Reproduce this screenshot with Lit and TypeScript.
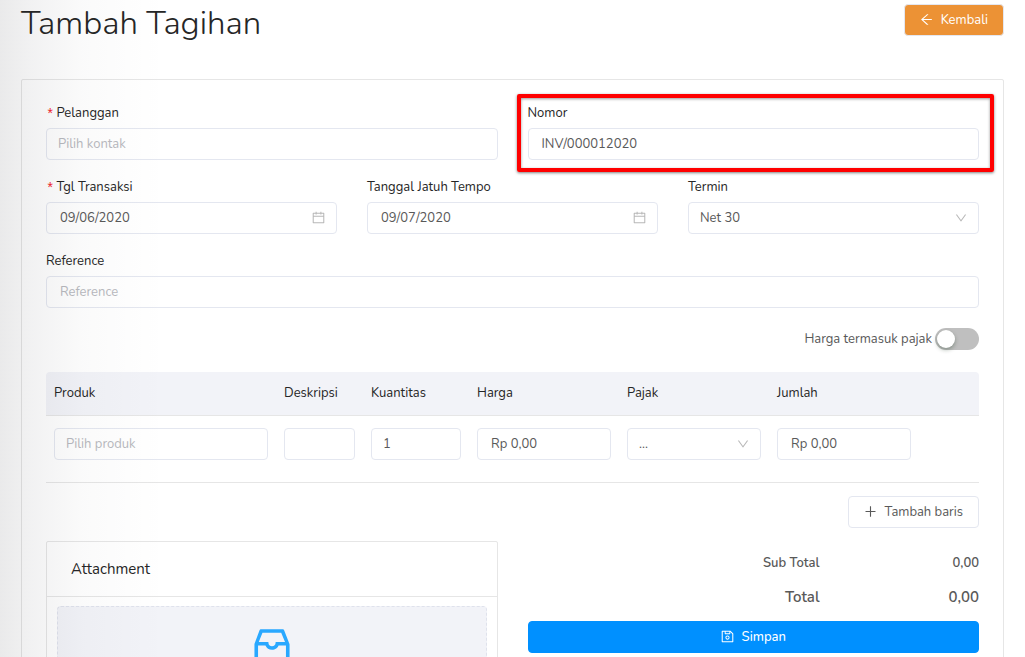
import { LitElement, html, css, svg } from "lit";
import { customElement, property, state } from "lit/decorators.js";

const ICONS: Record<string, string> = {
  "arrow-left":
    "M872 474H286.9l350.2-304c5.6-4.9 2.2-14-5.2-14h-88.5c-3.9 0-7.6 1.4-10.5 3.9L155 487.8a31.96 31.96 0 0 0 0 48.3L535.1 866c1.5 1.3 3.3 2 5.2 2h91.5c7.4 0 10.8-9.2 5.2-14L286.9 550H872c4.4 0 8-3.6 8-8v-60c0-4.4-3.6-8-8-8z",
  calendar:
    "M880 184H712v-64c0-4.4-3.6-8-8-8h-56c-4.4 0-8 3.6-8 8v64H384v-64c0-4.4-3.6-8-8-8h-56c-4.4 0-8 3.6-8 8v64H144c-17.7 0-32 14.3-32 32v664c0 17.7 14.3 32 32 32h736c17.7 0 32-14.3 32-32V216c0-17.7-14.3-32-32-32zm-40 656H184V460h656v380zM184 392V256h128v48c0 4.4 3.6 8 8 8h56c4.4 0 8-3.6 8-8v-48h256v48c0 4.4 3.6 8 8 8h56c4.4 0 8-3.6 8-8v-48h128v136H184z",
  down: "M884 256h-75c-5.1 0-9.9 2.5-12.9 6.6L512 654.2 227.9 262.6c-3-4.1-7.8-6.6-12.9-6.6h-75c-6.5 0-10.3 7.4-6.5 12.7l352.6 486.1c12.8 17.6 39 17.6 51.7 0l352.6-486.1c3.9-5.3.1-12.7-6.4-12.7z",
  plus: "M482 152h60q8 0 8 8v704q0 8-8 8h-60q-8 0-8-8V160q0-8 8-8zM176 474h672q8 0 8 8v60q0 8-8 8H176q-8 0-8-8v-60q0-8 8-8z",
  save: "M893.3 293.3L730.7 130.7c-7.5-7.5-16.7-13-26.7-16V112H144c-17.7 0-32 14.3-32 32v736c0 17.7 14.3 32 32 32h736c17.7 0 32-14.3 32-32V338.5c0-17-6.7-33.2-18.7-45.2zM384 184h256v104H384V184zm456 656H184V184h136v136c0 17.7 14.3 32 32 32h320c17.7 0 32-14.3 32-32V205.8l136 136V840zM512 442c-79.5 0-144 64.5-144 144s64.5 144 144 144 144-64.5 144-144-64.5-144-144-144zm0 224c-44.2 0-80-35.8-80-80s35.8-80 80-80 80 35.8 80 80-35.8 80-80 80z",
  inbox:
    "M885.2 446.3l-.2-.8-112.2-285.1c-5-16.1-19.9-27.2-36.8-27.2H281.2c-17 0-32.1 11.3-36.9 27.6L139.4 443l-.3.7-.2.8c-1.3 4.9-1.7 9.9-1 14.8-.1 1.6-.2 3.2-.2 4.8V830a60.9 60.9 0 0 0 60.8 60.8h627.2c33.5 0 60.8-27.3 60.9-60.8V464.1c0-1.3 0-2.6-.1-3.7.4-4.9 0-9.6-1.3-14.1zm-295.8-43l-.3 15.7c-.8 44.9-31.8 75.1-77.1 75.1-22.1 0-41.1-7.1-54.8-20.6S436 441.2 435.6 419l-.3-15.7H229.5L309 210h399.2l81.7 193.3H589.4zm-375 76.8h157.3c24.3 57.1 76 90.8 140.4 90.8 33.7 0 65-9.4 90.3-27.2 22.2-15.6 39.5-37.4 50.7-63.6h156.5V814H214.4V480.1z",
};

@customElement("ui-icon")
class UiIcon extends LitElement {
  @property() name = "";

  static styles = css`
    :host {
      display: inline-flex;
      width: 13px;
      height: 13px;
    }
    .glyph {
      width: 100%;
      height: 100%;
      fill: currentColor;
    }
  `;

  render() {
    return html`<svg class="glyph" viewBox="64 64 896 896" aria-hidden="true">
      ${svg`<path d=${ICONS[this.name] ?? ""}></path>`}
    </svg>`;
  }
}

@customElement("app-root")
class AppRoot extends LitElement {
  @state() private taxIncluded = false;

  static styles = css`
    :host {
      display: block;
      position: relative;
      height: 100vh;
      overflow-y: auto;
      scrollbar-width: none;
      background: #fff;
      color: #595959;
      font-family: Nunito, Lato, sans-serif;
      font-size: 13px;
      font-weight: 400;
      line-height: 18px;
    }
    * {
      box-sizing: border-box;
    }
    .shade {
      position: absolute;
      top: 0;
      bottom: 0;
      left: 0;
      width: 166px;
      pointer-events: none;
      background: linear-gradient(
        to right,
        rgba(20, 20, 30, 0.09),
        rgba(20, 20, 30, 0.055) 20%,
        rgba(20, 20, 30, 0.018) 50%,
        rgba(20, 20, 30, 0)
      );
    }
    .page {
      padding: 4px 21px 0;
    }
    .top {
      display: flex;
      justify-content: space-between;
      align-items: flex-start;
      height: 75px;
    }
    .title {
      margin: 0;
      color: #262626;
      font-size: 33px;
      font-weight: 300;
      line-height: 40px;
    }
    .btn {
      display: inline-flex;
      align-items: center;
      justify-content: center;
      gap: 8px;
      height: 32px;
      padding: 0 15px 1px;
      border: 1px solid #e4e7f0;
      border-radius: 4px;
      background: #fff;
      color: #595959;
      font: inherit;
      cursor: pointer;
    }
    .back {
      background: #ec9235;
      color: #fff;
    }
    .save {
      width: 100%;
      border-color: #0090ff;
      background: #0090ff;
      color: #fff;
      font-weight: 500;
    }
    .card {
      border: 1px solid #e6e6e6;
      border-radius: 2px;
      padding: 24px;
    }
    .form {
      display: grid;
      gap: 18px;
    }
    .row {
      display: grid;
      grid-auto-flow: column;
      grid-auto-columns: minmax(0, 1fr);
      gap: 30px;
    }
    .field {
      position: relative;
      display: grid;
      gap: 6px;
    }
    .label {
      display: flex;
      color: #262626;
    }
    .required::before {
      content: "*";
      margin: 4px 2px 0 0;
      color: #f5222d;
      font-family: "Liberation Mono", monospace;
      font-size: 14px;
      line-height: 14px;
    }
    .highlight {
      position: absolute;
      inset: -10px -15px -12px -11px;
      border: 4px solid #ff0000;
      border-radius: 2px;
      box-shadow: 0 1px 3px rgba(0, 0, 0, 0.5), inset 0 1px 3px rgba(0, 0, 0, 0.4);
      pointer-events: none;
    }
    .control {
      position: relative;
      display: flex;
    }
    .input {
      width: 100%;
      height: 32px;
      margin: 0;
      padding: 0 12px 1px 13px;
      border: 1px solid #e4e7f0;
      border-radius: 4px;
      outline: none;
      background: #fff;
      color: #595959;
      font: inherit;
      appearance: none;
    }
    .pick {
      padding: 0 11px 1px;
    }
    .input::placeholder {
      color: #b8b9be;
      opacity: 1;
    }
    .suffix {
      position: absolute;
      top: 9px;
      right: 12px;
      color: #b8b8b8;
      pointer-events: none;
    }
    .arrow {
      top: 10px;
      width: 12px;
      height: 12px;
    }
    .tax {
      display: flex;
      align-items: center;
      justify-content: flex-end;
      gap: 3px;
      padding: 20px 0 22px;
    }
    .switch {
      display: flex;
      align-items: center;
      width: 44px;
      height: 22px;
      margin: 0;
      padding: 2px;
      border-radius: 11px;
      background: #bfbfbf;
      appearance: none;
      cursor: pointer;
    }
    .switch::before {
      content: "";
      width: 18px;
      height: 18px;
      border-radius: 50%;
      background: #fff;
      box-shadow: 0 2px 4px rgba(0, 35, 11, 0.3);
    }
    .switch:checked {
      justify-content: flex-end;
      background: #0090ff;
    }
    .items {
      width: 100%;
      border-collapse: separate;
      border-spacing: 0;
      table-layout: fixed;
    }
    .items th {
      height: 44px;
      padding: 0 8px 2px;
      border-bottom: 1px solid #e6e6e6;
      background: #f2f3f8;
      color: #262626;
      font-weight: 400;
      text-align: left;
    }
    .items th:first-child {
      border-top-left-radius: 4px;
    }
    .items th:last-child {
      border-top-right-radius: 4px;
    }
    .items td {
      padding: 12px 8px 22px;
      border-bottom: 1px solid #e6e6e6;
    }
    .items .w-desc {
      width: 87px;
    }
    .items .w-qty {
      width: 106px;
    }
    .items .w-money {
      width: 150px;
    }
    .items .w-action {
      width: 60px;
    }
    .add {
      display: flex;
      justify-content: flex-end;
      padding: 13px 0;
    }
    .attach {
      border: 1px solid #e6e6e6;
      border-radius: 2px;
    }
    .attach-title {
      margin: 0;
      padding: 16px 24px;
      border-bottom: 1px solid #e6e6e6;
      color: #262626;
      font-size: 15px;
      font-weight: 400;
      line-height: 22px;
    }
    .drop {
      display: flex;
      justify-content: center;
      width: calc(100% - 20px);
      height: 140px;
      margin: 9px 10px 10px;
      padding: 19px 15px;
      border: 1px dashed #dfe2ec;
      border-radius: 4px;
      background: #f2f3f8;
      color: #29a8ff;
      font: inherit;
      cursor: pointer;
    }
    .big {
      width: 42px;
      height: 42px;
    }
    .sums {
      display: grid;
      grid-template-columns: 292px 1fr;
      gap: 16px 0;
      margin: 0 0 15px;
      padding-top: 13px;
      font-weight: 600;
      text-align: right;
    }
    .sums dd {
      margin: 0;
    }
    .grand {
      font-size: 15px;
    }
  `;

  private date(id: string, label: string, value: string, required = false) {
    return html`<div class="field">
      <label class="label ${required ? "required" : ""}" for=${id}>${label}</label>
      <div class="control">
        <input class="input" id=${id} .value=${value} />
        <ui-icon class="suffix" name="calendar"></ui-icon>
      </div>
    </div>`;
  }

  render() {
    return html`
      <main class="page">
        <header class="top">
          <h1 class="title">Tambah Tagihan</h1>
          <button class="btn back" type="button">
            <ui-icon name="arrow-left"></ui-icon>Kembali
          </button>
        </header>
        <section class="card">
          <div class="form">
            <div class="row">
              <div class="field">
                <label class="label required" for="customer">Pelanggan</label>
                <input class="input pick" id="customer" placeholder="Pilih kontak" />
              </div>
              <div class="field">
                <label class="label" for="number">Nomor</label>
                <input class="input" id="number" .value=${"INV/000012020"} />
                <div class="highlight"></div>
              </div>
            </div>
            <div class="row">
              ${this.date("date", "Tgl Transaksi", "09/06/2020", true)}
              ${this.date("due", "Tanggal Jatuh Tempo", "09/07/2020")}
              <div class="field">
                <label class="label" for="term">Termin</label>
                <div class="control">
                  <select class="input pick" id="term">
                    <option>Net 30</option>
                  </select>
                  <ui-icon class="suffix arrow" name="down"></ui-icon>
                </div>
              </div>
            </div>
            <div class="field">
              <label class="label" for="reference">Reference</label>
              <input class="input" id="reference" placeholder="Reference" />
            </div>
          </div>
          <div class="tax">
            <label for="tax">Harga termasuk pajak</label>
            <input
              class="switch"
              id="tax"
              type="checkbox"
              role="switch"
              .checked=${this.taxIncluded}
              @change=${(e: Event) => {
                this.taxIncluded = (e.target as HTMLInputElement).checked;
              }}
            />
          </div>
          <table class="items">
            <thead>
              <tr>
                <th id="c-product">Produk</th>
                <th id="c-desc" class="w-desc">Deskripsi</th>
                <th id="c-qty" class="w-qty">Kuantitas</th>
                <th id="c-price" class="w-money">Harga</th>
                <th id="c-tax" class="w-money">Pajak</th>
                <th id="c-amount" class="w-money">Jumlah</th>
                <th class="w-action"></th>
              </tr>
            </thead>
            <tbody>
              <tr>
                <td><input class="input pick" aria-labelledby="c-product" placeholder="Pilih produk" /></td>
                <td><input class="input" aria-labelledby="c-desc" /></td>
                <td><input class="input pick" aria-labelledby="c-qty" .value=${"1"} /></td>
                <td><input class="input" aria-labelledby="c-price" .value=${"Rp 0,00"} /></td>
                <td>
                  <div class="control">
                    <select class="input pick" aria-labelledby="c-tax">
                      <option>...</option>
                    </select>
                    <ui-icon class="suffix arrow" name="down"></ui-icon>
                  </div>
                </td>
                <td><input class="input" aria-labelledby="c-amount" .value=${"Rp 0,00"} /></td>
                <td></td>
              </tr>
            </tbody>
          </table>
          <div class="add">
            <button class="btn" type="button"><ui-icon name="plus"></ui-icon>Tambah baris</button>
          </div>
          <div class="row">
            <section class="attach">
              <h2 class="attach-title" id="attach">Attachment</h2>
              <button class="drop" type="button" aria-labelledby="attach">
                <ui-icon class="big" name="inbox"></ui-icon>
              </button>
            </section>
            <section>
              <dl class="sums">
                <dt>Sub Total</dt>
                <dd>0,00</dd>
                <dt class="grand">Total</dt>
                <dd class="grand">0,00</dd>
              </dl>
              <button class="btn save" type="button"><ui-icon name="save"></ui-icon>Simpan</button>
            </section>
          </div>
        </section>
      </main>
      <div class="shade"></div>
    `;
  }
}
